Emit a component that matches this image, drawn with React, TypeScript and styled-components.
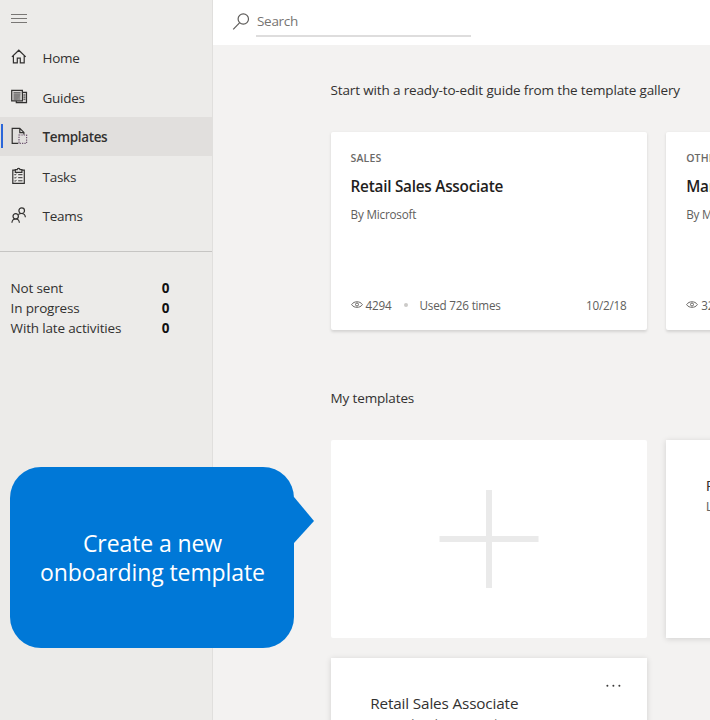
import React from 'react';
import styled, { createGlobalStyle, css } from 'styled-components';

const GlobalStyle = createGlobalStyle`
  * { box-sizing: border-box; }
  html, body { margin: 0; height: 100%; overflow: hidden; }
  body {
    font-family: "Open Sans", "Noto Sans", sans-serif;
    font-size: 13.5px;
    line-height: 20px;
    letter-spacing: -0.15px;
    color: #323130;
    background: #f3f2f1;
  }
`;

const Shell = styled.div`
  position: relative;
  display: flex;
  width: 710px;
  height: 720px;
  overflow: hidden;
`;

const Sidebar = styled.aside`
  flex: 0 0 213px;
  background: #ecebe9;
  border-right: 1px solid #e0dfdd;
`;

const MenuButton = styled.button`
  display: flex;
  align-items: center;
  width: 100%;
  height: 37.6px;
  padding: 0 0 0 11px;
  border: 0;
  background: none;
`;

const Nav = styled.nav`
  display: flex;
  flex-direction: column;
  height: 214px;
  border-bottom: 1px solid #c6c5c3;
`;

const NavItem = styled.a<{ $active?: boolean }>`
  display: flex;
  align-items: center;
  height: 39.5px;
  color: #323130;
  letter-spacing: -0.25px;
  ${({ $active }) => $active && css`
    background: #e1dfdd;
    font-weight: 600;
    letter-spacing: -0.35px;
  `}
`;

const NavLabel = styled.span`
  padding-top: 2px;
`;

const ActiveBar = styled.span<{ $active?: boolean }>`
  width: 2px;
  height: 24px;
  margin-left: 1px;
  background: ${({ $active }) => ($active ? '#2b66d9' : 'transparent')};
`;

const IconSlot = styled.span`
  display: flex;
  width: 31.5px;
  margin-left: 8px;
`;

const Stats = styled.dl`
  display: flex;
  flex-direction: column;
  margin: 26.4px 42.6px 0 10.6px;
`;

const StatRow = styled.div`
  display: flex;
  justify-content: space-between;
  height: 19.8px;
  dt { letter-spacing: -0.16px; }
  dd { margin: 0; font-weight: 700; color: #111; }
`;

const Main = styled.main`
  flex: 1 0 497px;
  min-width: 0;
`;

const Header = styled.header`
  display: flex;
  align-items: flex-start;
  gap: 6px;
  height: 45px;
  padding: 9px 0 0 19px;
  background: #fff;
  svg { margin-top: 3px; }
`;

const SearchField = styled.div`
  width: 215px;
  height: 27.5px;
  padding: 2px 0 0 1px;
  border-bottom: 2px solid #dedddd;
  letter-spacing: -0.3px;
  color: #767472;
`;

const Content = styled.div`
  padding: 35px 0 0 117.6px;
`;

const Heading = styled.h2`
  margin: 0 0 32px;
  font-size: 13.5px;
  font-weight: 400;
  line-height: 20px;
`;

const CardGrid = styled.section`
  display: grid;
  grid-template-columns: 316px 316px;
  grid-auto-rows: 198px;
  gap: 20px 19.6px;
  margin-bottom: 58px;
`;

const cardBase = css`
  background: #fff;
  border-radius: 2px;
`;

const GalleryCard = styled.article`
  ${cardBase}
  display: flex;
  flex-direction: column;
  padding: 18px 20px 17px;
  box-shadow: 0 1.5px 3px rgba(0, 0, 0, 0.13);
`;

const Category = styled.div`
  font-size: 10.5px;
  font-weight: 600;
  line-height: 16px;
  letter-spacing: 0.15px;
  color: #6b6967;
`;

const GalleryTitle = styled.h3`
  margin: 10px 0;
  font-size: 15.3px;
  font-weight: 600;
  line-height: 20px;
  letter-spacing: -0.24px;
  color: #1f1e1d;
`;

const Small = styled.div`
  font-size: 11.7px;
  line-height: 16px;
  letter-spacing: -0.2px;
  color: #605e5c;
`;

const Footer = styled(Small)`
  display: flex;
  align-items: center;
  margin-top: auto;
`;

const Views = styled.span`
  margin-left: 3px;
`;

const Dot = styled.span`
  width: 4px;
  height: 4px;
  margin: 0 12px;
  border-radius: 50%;
  background: #cccac8;
`;

const DateText = styled.span`
  margin-left: auto;
`;

const CreateCard = styled.button`
  ${cardBase}
  display: grid;
  place-items: center;
  padding: 0;
  border: 0;
`;

const TemplateCard = styled.article`
  ${cardBase}
  position: relative;
  padding: 35px 39.6px 0;
  border-radius: 0;
  box-shadow: 0 1px 6px rgba(0, 0, 0, 0.14);
`;

const TemplateTitle = styled.h3`
  margin: 0;
  font-size: 15.3px;
  font-weight: 400;
  line-height: 20px;
  letter-spacing: -0.15px;
`;

const TemplateMeta = styled.div`
  margin-top: 0.5px;
  white-space: nowrap;
  color: #686664;
`;

const MoreButton = styled.button`
  position: absolute;
  top: 22px;
  right: 25px;
  display: flex;
  padding: 0;
  border: 0;
  background: none;
`;

const Callout = styled.div`
  position: absolute;
  left: 10px;
  top: 467px;
  display: flex;
  align-items: center;
  justify-content: center;
  width: 284px;
  height: 181px;
  padding: 1px 0 0 1px;
  border-radius: 31px;
  background: #0078d7;
  color: #fff;
  font-size: 23px;
  line-height: 29px;
  letter-spacing: -0.1px;
  text-align: center;
`;

const CalloutTail = styled.svg`
  position: absolute;
  left: 283px;
  top: 30px;
`;

const line = { fill: 'none', stroke: '#323130', strokeWidth: 1.2 };

const HomeIcon = () => (
  <svg width="16" height="16" viewBox="0 0 16 16" {...line}>
    <path d="M.9 7.9 7.8 1.2l6.9 6.7M2.4 6.6v7.2h3.9V9.2h3v4.6h3.9V6.6" />
  </svg>
);

const GuidesIcon = () => (
  <svg width="17" height="16" viewBox="0 0 17 16" {...line}>
    <path d="M5.3 11.9v1.700h10.200V3.300H11.400M.7 1.400h10.700v10.500H.7z" fill="#d6d4d3" />
    <path d="M2.500 3.900h7M2.500 6h7M2.500 8h7M2.500 10h7M12.400 6h2M12.400 8.100h2M12.400 10.200h2" strokeWidth="1" />
  </svg>
);

const TemplatesIcon = () => (
  <svg width="17" height="18" viewBox="0 0 17 18" {...line}>
    <path d="M7.300 16.300H1.200V1.300h7.600l4.100 4.100v2.200M8.800 1.300v4.300h4.100" />
    <path d="M8 8h7.600v8.300H8z" strokeDasharray="1.300 1.100" stroke="#6d546f" />
  </svg>
);

const TasksIcon = () => (
  <svg width="16" height="18" viewBox="0 0 16 18" {...line}>
    <path d="M4.300 3.200H1.800v13.100h11.500V3.200h-2.500M4.300 2.700h1.900a1.400 1.400 0 0 1 2.800 0h1.900v2.700H4.300z" />
    <path d="m3.300 7.400.8.8 1.400-1.500M3.300 10.500l.8.800 1.400-1.500M3.300 13.600l.8.800 1.400-1.500M7.200 7.700h4.300M7.200 10.700h4.300M7.200 13.800h4.300" strokeWidth="1" />
  </svg>
);

const TeamsIcon = () => (
  <svg width="16" height="17" viewBox="0 0 16 17" {...line}>
    <circle cx="10.700" cy="3.700" r="2.800" />
    <circle cx="4.700" cy="9.300" r="2.700" />
    <path d="M.9 15.700c.2-2.200 1.700-3.700 3.800-3.700s3.500 1.500 3.700 3.700M7.300 7.700c.7-.8 1.900-1.200 3.200-1.200 2.200 0 3.700 1.600 3.900 3.700" />
  </svg>
);

const SearchIcon = () => (
  <svg width="18" height="18" viewBox="0 0 18 18" fill="none" stroke="#5f5d5b" strokeWidth="1.200">
    <circle cx="11.300" cy="7" r="5.200" />
    <path d="M7.500 10.800 1.200 17.300" />
  </svg>
);

const EyeIcon = () => (
  <svg width="12" height="10" viewBox="0 0 12 10" fill="none" stroke="#6b6967" strokeWidth="1">
    <path d="M.6 4.600C2 2.500 3.900 1.800 6 1.800s4 .7 5.400 2.800C10 6.700 8.100 7.300 6 7.300S2 6.700.6 4.600z" />
    <circle cx="6" cy="4.500" r="1.500" />
  </svg>
);

const navItems = [
  { label: 'Home', Icon: HomeIcon },
  { label: 'Guides', Icon: GuidesIcon },
  { label: 'Templates', Icon: TemplatesIcon, active: true },
  { label: 'Tasks', Icon: TasksIcon },
  { label: 'Teams', Icon: TeamsIcon },
];

const stats = [
  { label: 'Not sent', value: 0 },
  { label: 'In progress', value: 0 },
  { label: 'With late activities', value: 0 },
];

const gallery = [
  { category: 'SALES', title: 'Retail Sales Associate', views: '4294', used: 'Used 726 times', date: '10/2/18' },
  { category: 'OTHER', title: 'Manager', views: '3210', used: 'Used 512 times', date: '10/2/18' },
];

const More = () => (
  <MoreButton aria-label="More options">
    <svg width="18" height="12" viewBox="0 0 18 12" fill="#3b3a39">
      <circle cx="3.400" cy="5.800" r="1" />
      <circle cx="9.400" cy="5.800" r="1" />
      <circle cx="15.400" cy="5.800" r="1" />
    </svg>
  </MoreButton>
);

export default function App() {
  return (
    <>
      <GlobalStyle />
      <Shell>
        <Sidebar>
          <MenuButton aria-label="Menu">
            <svg width="16" height="12" viewBox="0 0 16 12" stroke="#797775" strokeWidth="1">
              <path d="M0 1.500h16M0 5.500h16M0 9.500h16" />
            </svg>
          </MenuButton>
          <Nav>
            {navItems.map(({ label, Icon, active }) => (
              <NavItem key={label} $active={active}>
                <ActiveBar $active={active} />
                <IconSlot><Icon /></IconSlot>
                <NavLabel>{label}</NavLabel>
              </NavItem>
            ))}
          </Nav>
          <Stats>
            {stats.map(({ label, value }) => (
              <StatRow key={label}>
                <dt>{label}</dt>
                <dd>{value}</dd>
              </StatRow>
            ))}
          </Stats>
        </Sidebar>
        <Main>
          <Header>
            <SearchIcon />
            <SearchField>Search</SearchField>
          </Header>
          <Content>
            <Heading>Start with a ready-to-edit guide from the template gallery</Heading>
            <CardGrid>
              {gallery.map((card) => (
                <GalleryCard key={card.title}>
                  <Category>{card.category}</Category>
                  <GalleryTitle>{card.title}</GalleryTitle>
                  <Small>By Microsoft</Small>
                  <Footer>
                    <EyeIcon />
                    <Views>{card.views}</Views>
                    <Dot />
                    {card.used}
                    <DateText>{card.date}</DateText>
                  </Footer>
                </GalleryCard>
              ))}
            </CardGrid>
            <Heading>My templates</Heading>
            <CardGrid>
              <CreateCard aria-label="Create a new template">
                <svg width="100" height="100" viewBox="0 0 100 100" stroke="#eaeaea" strokeWidth="6">
                  <path d="M50 1v98M.500 50h99" />
                </svg>
              </CreateCard>
              <TemplateCard>
                <TemplateTitle>Retail Sales Associate</TemplateTitle>
                <TemplateMeta>Last edited 9/18/18 |</TemplateMeta>
              </TemplateCard>
              <TemplateCard>
                <More />
                <TemplateTitle>Retail Sales Associate</TemplateTitle>
                <TemplateMeta>Last edited 9/18/18 |</TemplateMeta>
              </TemplateCard>
            </CardGrid>
          </Content>
        </Main>
        <Callout>
          <span>Create a new<br />onboarding template</span>
          <CalloutTail width="21" height="47" viewBox="0 0 21 47" fill="#0078d7">
            <path d="M0 0h1l20 24L1 46H0z" />
          </CalloutTail>
        </Callout>
      </Shell>
    </>
  );
}
